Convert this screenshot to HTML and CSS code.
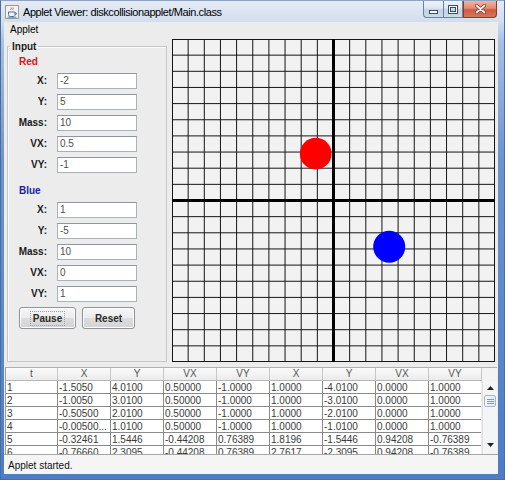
FILE: index.html
```html
<!DOCTYPE html>
<html>
<head>
<meta charset="utf-8">
<link rel="stylesheet" href="styles.css">
</head>
<body>
<div class="window">
  <div class="titlebar">
    <span class="app-icon">
      <svg width="14" height="14" viewBox="0 0 14 14">
        <rect x="0.5" y="0.5" width="13" height="13" fill="#f4f4f4" stroke="#9a9a9a"/>
        <path d="M6 2.5c1 1-1 1.5 0 2.5M8 2.5c1 1-1 1.5 0 2.5" stroke="#d0502a" fill="none" stroke-width="0.9"/>
        <path d="M3.5 7h6.5v2.5c0 1.3-1 2-2 2h-2.5c-1 0-2-.7-2-2z" fill="none" stroke="#4a6ea8" stroke-width="1"/>
        <path d="M10 7.8h1c.8 0 .8 1.6 0 1.6h-1" fill="none" stroke="#4a6ea8" stroke-width="0.9"/>
        <path d="M2.5 12.2h9" stroke="#4a6ea8" stroke-width="0.9"/>
      </svg>
    </span>
    <span class="title">Applet Viewer: diskcollisionapplet/Main.class</span>
    <div class="controls">
      <span class="ctl min"><svg width="9" height="4" viewBox="0 0 9 4"><rect x="0.5" y="0.5" width="8" height="3" fill="#fff" stroke="#3b4d66"/></svg></span>
      <span class="ctl max"><svg width="10" height="9" viewBox="0 0 10 9"><rect x="0.5" y="0.5" width="9" height="8" fill="none" stroke="#3b4d66"/><rect x="1.5" y="1.5" width="7" height="6" fill="none" stroke="#fff"/><rect x="2.5" y="2.5" width="5" height="4" fill="none" stroke="#3b4d66"/></svg></span>
      <span class="ctl close"><svg width="11" height="10" viewBox="0 0 11 10"><path d="M1.5 1.5l8 7M9.5 1.5l-8 7" stroke="#7a2a1c" stroke-width="3.2" stroke-linecap="round"/><path d="M1.5 1.5l8 7M9.5 1.5l-8 7" stroke="#fff" stroke-width="1.8" stroke-linecap="round"/></svg></span>
    </div>
  </div>

  <div class="client">
    <div class="menubar"><span>Applet</span></div>

    <div class="main">
      <fieldset class="panel">
        <legend>Input</legend>
        <div class="group-title red">Red</div>
        <div class="form">
          <span class="lbl">X:</span><span class="field">-2</span>
          <span class="lbl">Y:</span><span class="field">5</span>
          <span class="lbl">Mass:</span><span class="field">10</span>
          <span class="lbl">VX:</span><span class="field">0.5</span>
          <span class="lbl">VY:</span><span class="field">-1</span>
        </div>
        <div class="group-title blue">Blue</div>
        <div class="form">
          <span class="lbl">X:</span><span class="field">1</span>
          <span class="lbl">Y:</span><span class="field">-5</span>
          <span class="lbl">Mass:</span><span class="field">10</span>
          <span class="lbl">VX:</span><span class="field">0</span>
          <span class="lbl">VY:</span><span class="field">1</span>
        </div>
        <div class="buttons">
          <button class="jbtn pause"><span class="focus">Pause</span></button>
          <button class="jbtn reset">Reset</button>
        </div>
      </fieldset>

      <svg class="grid" width="323" height="323" viewBox="0 0 200 200">
        <rect x="0" y="0" width="200" height="200" fill="#f2f2f2"/>
        <path stroke="#151515" stroke-width="1" vector-effect="non-scaling-stroke" fill="none"
          d="M0.3 0V200M10 0V200M20 0V200M30 0V200M40 0V200M50 0V200M60 0V200M70 0V200M80 0V200M90 0V200M110 0V200M120 0V200M130 0V200M140 0V200M150 0V200M160 0V200M170 0V200M180 0V200M190 0V200M199.7 0V200
             M0 0.3H200M0 10H200M0 20H200M0 30H200M0 40H200M0 50H200M0 60H200M0 70H200M0 80H200M0 90H200M0 110H200M0 120H200M0 130H200M0 140H200M0 150H200M0 160H200M0 170H200M0 180H200M0 190H200M0 199.7H200"/>
        <path stroke="#000" stroke-width="3" vector-effect="non-scaling-stroke" d="M100 0V200M0 100H200"/>
        <circle cx="89" cy="71" r="9.8" fill="#ff0000"/>
        <circle cx="134.5" cy="128.6" r="9.9" fill="#0000ff"/>
      </svg>
    </div>

    <div class="table-wrap">
      <div class="thead">
        <span>t</span><span>X</span><span>Y</span><span>VX</span><span>VY</span><span>X</span><span>Y</span><span>VX</span><span>VY</span><span class="corner"></span>
      </div>
      <div class="tbody">
        <div class="rows">
          <div class="row"><span>1</span><span>-1.5050</span><span>4.0100</span><span>0.50000</span><span>-1.0000</span><span>1.0000</span><span>-4.0100</span><span>0.0000</span><span>1.0000</span></div>
          <div class="row"><span>2</span><span>-1.0050</span><span>3.0100</span><span>0.50000</span><span>-1.0000</span><span>1.0000</span><span>-3.0100</span><span>0.0000</span><span>1.0000</span></div>
          <div class="row"><span>3</span><span>-0.50500</span><span>2.0100</span><span>0.50000</span><span>-1.0000</span><span>1.0000</span><span>-2.0100</span><span>0.0000</span><span>1.0000</span></div>
          <div class="row"><span>4</span><span>-0.00500...</span><span>1.0100</span><span>0.50000</span><span>-1.0000</span><span>1.0000</span><span>-1.0100</span><span>0.0000</span><span>1.0000</span></div>
          <div class="row"><span>5</span><span>-0.32461</span><span>1.5446</span><span>-0.44208</span><span>0.76389</span><span>1.8196</span><span>-1.5446</span><span>0.94208</span><span>-0.76389</span></div>
          <div class="row"><span>6</span><span>-0.76660</span><span>2.3095</span><span>-0.44208</span><span>0.76389</span><span>2.7617</span><span>-2.3095</span><span>0.94208</span><span>-0.76389</span></div>
        </div>
        <div class="scrollbar">
          <span class="sb-btn"><svg width="7" height="4" viewBox="0 0 7 4"><path d="M0 4L3.5 0L7 4z" fill="#222"/></svg></span>
          <span class="sb-thumb"><svg width="7" height="5" viewBox="0 0 7 5"><path d="M0 0.5H7M0 2.5H7M0 4.5H7" stroke="#8a9bb4" stroke-width="1"/></svg></span>
          <span class="sb-track"></span>
          <span class="sb-btn down"><svg width="7" height="4" viewBox="0 0 7 4"><path d="M0 0L3.5 4L7 0z" fill="#222"/></svg></span>
        </div>
      </div>
    </div>

    <div class="status">Applet started.</div>
  </div>
</div>
</body>
</html>
```

FILE: styles.css
```css
* { box-sizing: border-box; }
html, body { margin: 0; padding: 0; }
body {
  width: 505px;
  height: 480px;
  overflow: hidden;
  font-family: "Liberation Sans", Arial, sans-serif;
  font-size: 10px;
  color: #000;
  background: #fff;
}

.window {
  width: 505px;
  height: 480px;
  display: flex;
  flex-direction: column;
  border: 1px solid #4b6c9e;
  border-top-color: #8ea4c4;
  background: linear-gradient(to bottom, #e4ebf5 0px, #d2deee 21px, #a9c0e2 40px, #6d93cc 160px, #4f7cc2 100%);
}

/* title bar */
.titlebar {
  height: 21px;
  flex: none;
  display: flex;
  align-items: center;
  padding-left: 4px;
}
.app-icon { width: 14px; height: 14px; display: flex; margin-top: 1px; }
.title {
  margin-left: 4px;
  font-size: 11px;
  letter-spacing: -0.42px;
  color: #000;
  white-space: nowrap;
}
.controls {
  margin-left: auto;
  margin-right: 7px;
  align-self: flex-start;
  display: flex;
}
.ctl {
  height: 17px;
  display: flex;
  align-items: center;
  justify-content: center;
  border: 1px solid #6f819c;
  border-top: none;
}
.min, .max {
  width: 20px;
  background: linear-gradient(to bottom, #eef3f9 0%, #dce5f1 45%, #c3d1e4 55%, #ccd9ea 100%);
}
.min { border-radius: 0 0 0 4px; border-right: none; }
.min svg { margin-top: 6px; }
.close {
  width: 34px;
  border-radius: 0 0 4px 0;
  border-color: #8b3b2c;
  background: linear-gradient(to bottom, #efb4a6 0%, #e08a76 45%, #cf5a40 55%, #d8765a 100%);
}

/* client */
.client {
  flex: 1;
  margin: 0 6px 5px 3px;
  display: flex;
  flex-direction: column;
  background: #ececec;
}
.menubar {
  height: 16px;
  flex: none;
  line-height: 16px;
  padding-left: 6px;
  font-size: 10px;
}

.main {
  height: 324px;
  flex: none;
  display: flex;
  align-items: flex-start;
}

.panel {
  margin: 2px 0 0 3px;
  padding: 0;
  width: 160px;
  height: 322px;
  min-width: 0;
  border: 1px solid #c6c6c6;
  box-shadow: inset 1px 1px 0 #fafafa;
}
.panel legend {
  margin-left: 2px;
  padding: 0 2px;
  font-weight: bold;
  font-size: 10px;
  line-height: 13px;
  color: #1a1a1a;
}
.group-title {
  margin: 3px 0 0 11px;
  height: 12px;
  line-height: 12px;
  font-weight: bold;
  font-size: 10px;
}
.group-title.red { color: #e41010; }
.group-title.blue { color: #1b1ba8; margin-top: 12px; }

.form {
  margin-top: 5px;
  display: grid;
  grid-template-columns: 39px 80px;
  grid-auto-rows: 16px;
  column-gap: 10px;
  row-gap: 5px;
}
.lbl {
  text-align: right;
  font-weight: bold;
  line-height: 16px;
  color: #1a1a1a;
}
.field {
  background: #fff;
  border: 1px solid #a9b1bb;
  border-top-color: #8e96a2;
  line-height: 14px;
  padding-left: 2px;
  color: #505050;
}

.buttons {
  margin: 5px 0 0 11px;
  display: flex;
  gap: 6px;
}
.jbtn {
  height: 22px;
  padding: 0;
  font-family: "Liberation Sans", Arial, sans-serif;
  font-size: 10px;
  font-weight: bold;
  color: #2a2a2a;
  border: 1px solid #8d939a;
  border-radius: 3px;
  background: linear-gradient(to bottom, #f6f6f6 0%, #ececec 48%, #dcdcdc 52%, #d4d4d4 100%);
  box-shadow: inset 0 0 0 1px #fcfcfc;
}
.pause { width: 57px; }
.reset { width: 53px; }
.focus { outline: 1px dotted #9aa0a8; outline-offset: 1px; padding: 0 1px; }

.grid {
  display: block;
  margin: 1px 0 0 5px;
  flex: none;
}

/* table */
.table-wrap {
  margin: 5px 0 0 1px;
  width: 492px;
  flex: none;
  border-top: 1px solid #b0b0b0;
  border-left: 1px solid #9d9d9d;
}
.thead {
  display: grid;
  grid-template-columns: 52px repeat(8, 53px) 15px;
  height: 13px;
}
.thead span {
  text-align: center;
  line-height: 12px;
  color: #555;
  border-right: 1px solid #c7c7c7;
  border-bottom: 1px solid #b6b6b6;
  background: linear-gradient(to bottom, #fbfbfb, #ebebeb);
}
.thead .corner { border-right: none; background: #f3f3f3; border-bottom: none; }

.tbody {
  height: 73px;
  display: flex;
  overflow: hidden;
}
.rows {
  width: 476px;
  background: #fff;
  overflow: hidden;
}
.row {
  display: grid;
  grid-template-columns: 52px repeat(8, 53px);
  height: 13px;
}
.row span {
  border-right: 1px solid #8a8a8a;
  border-bottom: 1px solid #8a8a8a;
  line-height: 12px;
  padding-top: 1px;
  padding-left: 1px;
  color: #3a3a3a;
  white-space: nowrap;
  overflow: hidden;
}
.scrollbar {
  width: 15px;
  margin-left: 1px;
  display: flex;
  flex-direction: column;
  background: #f4f5f7;
  border-left: 1px solid #e0e0e0;
}
.sb-btn {
  height: 14px;
  flex: none;
  display: flex;
  align-items: center;
  justify-content: center;
  background: #f4f5f7;
}
.sb-btn.down { height: 18px; }
.sb-thumb {
  height: 12px;
  flex: none;
  margin: 0 1px;
  display: flex;
  align-items: center;
  justify-content: center;
  border: 1px solid #a8b6c8;
  border-radius: 2px;
  background: linear-gradient(to right, #f4f7fb, #dfe7f1);
}
.sb-track { flex: 1; }

.status {
  height: 20px;
  flex: none;
  line-height: 19px;
  padding-top: 1px;
  padding-left: 4px;
  background: #f5f5f5;
  border-top: 1px solid #a6a6a6;
  color: #111;
}
```
